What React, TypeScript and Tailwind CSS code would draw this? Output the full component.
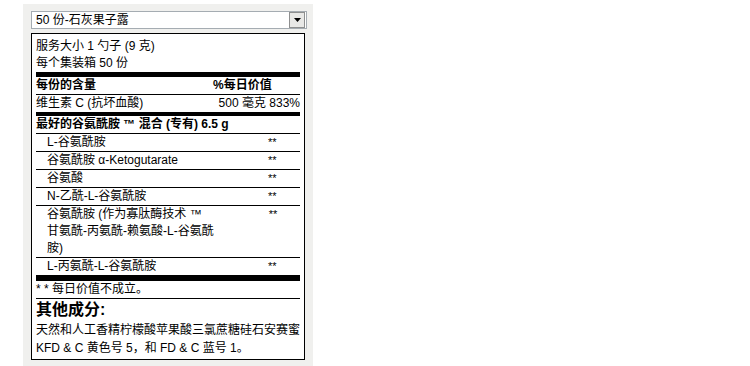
const font = { fontFamily: '"Liberation Sans", "Noto Sans CJK SC", sans-serif' };

const items = ["L-谷氨酰胺", "谷氨酰胺 α-Ketogutarate", "谷氨酸", "N-乙酰-L-谷氨酰胺"];

function Row({ children, last = false }: { children: React.ReactNode; last?: boolean }) {
  return (
    <div className={`grid grid-cols-[1fr_87px] leading-[17px] ${last ? "" : "border-b border-black"}`}>
      <div className="whitespace-nowrap pl-[11px]">{children}</div>
      <div className="pl-[55px] text-[11px]">**</div>
    </div>
  );
}

export default function App() {
  return (
    <div className="min-h-screen bg-white pt-[4px] text-[12px] text-black" style={font}>
      <div className="ml-[23px] w-[290px] bg-[#f0f0ee] px-[8px] pt-[7px] pb-[6px]">
        <div className="flex h-[18px] w-[276px] items-center justify-between border border-[#a5acb2] bg-white">
          <span className="pl-[4px] leading-[16px]">50 份-石灰果子露</span>
          <span className="mr-px flex h-[16px] w-[16px] items-center justify-center border border-[#8e8f8f] bg-[#e8e8e6]">
            <svg width="7" height="4" viewBox="0 0 7 4">
              <path d="M0 0h7L3.5 4z" fill="#000" />
            </svg>
          </span>
        </div>

        <div className="mt-[4px] w-[274px] border border-black bg-white px-[4px] pt-[4px] pb-[2px]">
          <div className="leading-[17px]">服务大小 1 勺子 (9 克)</div>
          <div className="leading-[17px]">每个集装箱 50 份</div>
          <div className="h-[5px] bg-black" />

          <div className="grid grid-cols-[1fr_87px] border-b border-black font-bold leading-[17px]">
            <div>每份的含量</div>
            <div>%每日价值</div>
          </div>
          <div className="flex justify-between leading-[17px]">
            <span>维生素 C (抗坏血酸)</span>
            <span>500 毫克 833%</span>
          </div>
          <div className="h-[4px] bg-black" />

          <div className="border-b border-black font-bold leading-[17px]">
            最好的谷氨酰胺 ™ 混合 (专有) 6.5 g
          </div>
          {items.map((name) => (
            <Row key={name}>{name}</Row>
          ))}
          <Row>
            谷氨酰胺 (作为寡肽酶技术 ™
            <br />
            甘氨酰-丙氨酰-赖氨酸-L-谷氨酰
            <br />
            胺)
          </Row>
          <Row last>L-丙氨酰-L-谷氨酰胺</Row>
          <div className="h-[6px] bg-black" />

          <div className="border-b border-black leading-[17px]">* * 每日价值不成立。</div>
          <div className="text-[16px] font-bold leading-[22px]">其他成分:</div>
          <div className="leading-[18px]">
            天然和人工香精柠檬酸苹果酸三氯蔗糖硅石安赛蜜
            <br />
            KFD &amp; C 黄色号 5，和 FD &amp; C 蓝号 1。
          </div>
        </div>
      </div>
    </div>
  );
}
